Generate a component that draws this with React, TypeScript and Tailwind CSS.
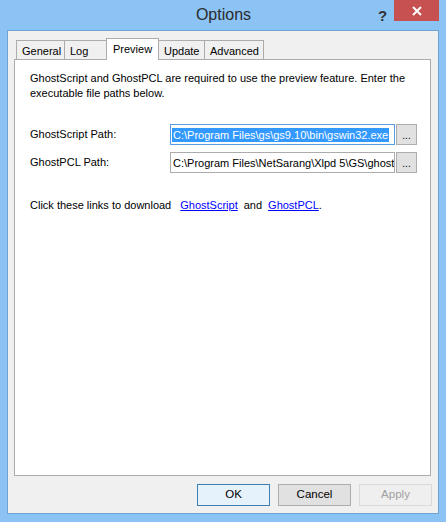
import React from 'react'

const font = { fontFamily: '"Segoe UI", "Liberation Sans", Arial, sans-serif' }

const tabs = [
  { label: 'General', w: 'w-[49px]' },
  { label: 'Log', w: 'w-[43px]' },
  { label: 'Preview', w: 'w-[53px]' },
  { label: 'Update', w: 'w-[47px]' },
  { label: 'Advanced', w: 'w-[60px]' },
]

const Tab = (props: { label: string; w: string; active: boolean }) => {
  if (props.active) {
    return (
      <div
        className={`relative z-10 -ml-px -mb-px h-[22px] ${props.w} border border-b-0 border-[#acacac] bg-white pl-[6px] pt-[3px] text-[11px] leading-[14px] text-black`}
      >
        {props.label}
      </div>
    )
  }
  return (
    <div
      className={`-ml-px h-[19px] ${props.w} border border-b-0 border-[#acacac] bg-[#f0f0f0] pl-[5px] pt-[3px] text-[11px] leading-[14px] text-black first:ml-0`}
    >
      {props.label}
    </div>
  )
}

const PathRow = (props: { label: string; value: string; focused?: boolean }) => {
  return (
    <div className="flex items-center h-[21px]">
      <div className="w-[140px] text-[11px] text-black">{props.label}</div>
      <div
        className={
          props.focused
            ? 'w-[225px] h-[21px] border border-[#569de5] bg-white pl-[1px] flex items-center overflow-hidden whitespace-nowrap'
            : 'w-[225px] h-[21px] border border-[#acacac] bg-white pl-[1px] flex items-center overflow-hidden whitespace-nowrap'
        }
      >
        <span
          className={
            props.focused
              ? 'bg-[#3399ff] text-white text-[11px] leading-[14px] px-px min-w-0 overflow-hidden'
              : 'text-black text-[11px] leading-[14px] px-px min-w-0 overflow-hidden'
          }
        >
          {props.value}
        </span>
      </div>
      <button className="ml-[1px] w-[21px] h-[21px] border border-[#adadad] bg-[#e1e1e1] text-[10px] leading-[10px] text-black flex items-center justify-center pt-[3px]">
        ...
      </button>
    </div>
  )
}

const DialogButton = (props: { label: string; kind: 'default' | 'normal' | 'disabled' }) => {
  const cls =
    props.kind === 'default'
      ? 'border-[#3c7fb1] bg-[#e5f1fb] text-black'
      : props.kind === 'normal'
        ? 'border-[#adadad] bg-[#e1e1e1] text-black'
        : 'border-[#d9d9d9] bg-[#efefef] text-[#a0a0a0]'
  return (
    <div className={`w-[73px] h-[22px] border ${cls} flex items-center justify-center text-[11.5px]`}>
      {props.label}
    </div>
  )
}

export default function App() {
  return (
    <div
      className="w-[446px] h-[522px] bg-[#8cc3f5] flex flex-col pl-[7px] pr-[7px] pb-[8px] overflow-hidden"
      style={font}
    >
      <div className="relative h-[30px] flex items-center justify-center shrink-0">
        <span className="text-[16px] text-[#2b2b2b] -mt-[1px] ml-[1px]">Options</span>
        <span className="absolute left-[371px] top-[5px] text-[15px] font-bold text-[#333]">?</span>
        <div className="absolute left-[387px] top-0 w-[45px] h-[21px] bg-[#c75050] flex items-center justify-center">
          <svg width="10" height="10" viewBox="0 0 10 10">
            <path d="M1 1 L9 9 M9 1 L1 9" stroke="#fff" strokeWidth="2" />
          </svg>
        </div>
      </div>

      <div className="flex-1 border border-[#6fa3d4] bg-[#f0f0f0] flex flex-col px-[6px] pt-[7px] pb-[7px]">
        <div className="flex items-end pl-[2px] h-[21px] shrink-0">
          {tabs.map((t) => (
            <Tab key={t.label} label={t.label} w={t.w} active={t.label === 'Preview'} />
          ))}
        </div>

        <div className="flex-1 border border-[#acacac] bg-white mr-[1px] pl-[15px] pr-[4px] pt-[11px]">
          <p className="text-[11px] leading-[15px] text-black whitespace-nowrap">
            GhostScript and GhostPCL are required to use the preview feature. Enter the
            <br />
            executable file paths below.
          </p>

          <div className="mt-[23px] flex flex-col gap-[7px]">
            <PathRow label="GhostScript Path:" value="C:\Program Files\gs\gs9.10\bin\gswin32.exe" focused />
            <PathRow label="GhostPCL Path:" value="C:\Program Files\NetSarang\Xlpd 5\GS\ghost" />
          </div>

          <div className="mt-[25px] flex items-center text-[11px] leading-[15px] text-black">
            <span>Click these links to download</span>
            <a className="ml-[9px] text-[#0000ff] underline" href="#">
              GhostScript
            </a>
            <span className="ml-[6px]">and</span>
            <a className="ml-[6px] text-[#0000ff] underline" href="#">
              GhostPCL
            </a>
            <span>.</span>
          </div>
        </div>

        <div className="flex justify-end gap-[8px] mt-[8px] shrink-0">
          <DialogButton label="OK" kind="default" />
          <DialogButton label="Cancel" kind="normal" />
          <DialogButton label="Apply" kind="disabled" />
        </div>
      </div>
    </div>
  )
}
